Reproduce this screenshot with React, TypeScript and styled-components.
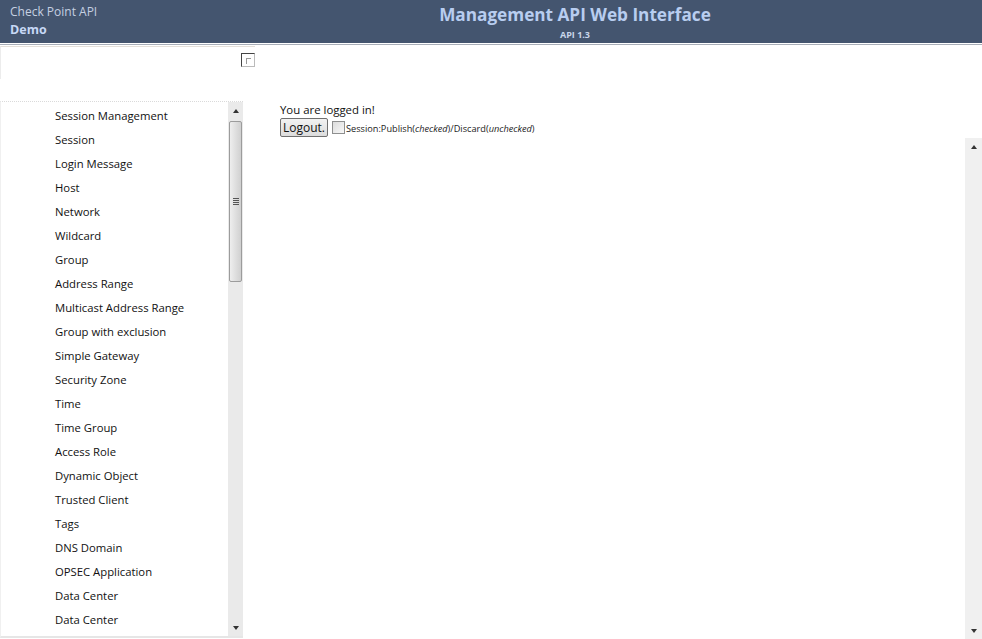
import React from "react";
import styled, { createGlobalStyle } from "styled-components";

const Global = createGlobalStyle`
  html, body { margin: 0; padding: 0; background: #fff; }
  body { font-family: "Open Sans", "Noto Sans", sans-serif; color: #111; overflow: hidden; }
`;

const Page = styled.div`
  width: 982px;
  height: 639px;
  display: flex;
  flex-direction: column;
  overflow: hidden;
`;

const Header = styled.header`
  height: 43px;
  background: #44556f;
  border-bottom: 1px solid #fff;
  box-shadow: 0 1px 0 #a8aeb8;
  display: grid;
  grid-template-columns: 168px 1fr;
  align-items: start;
  flex-shrink: 0;
`;

const Brand = styled.div`
  padding: 3px 0 0 10px;
  display: flex;
  flex-direction: column;
`;

const BrandTop = styled.span`
  font-size: 12px;
  line-height: 17px;
  color: #c5d0e2;
`;

const BrandName = styled.span`
  font-size: 12.5px;
  line-height: 20px;
  font-weight: 700;
  color: #c7d8f6;
`;

const TitleBlock = styled.div`
  display: flex;
  flex-direction: column;
  align-items: center;
  padding-top: 3px;
`;

const Title = styled.h1`
  margin: 0;
  font-size: 17.2px;
  line-height: 24px;
  font-weight: 700;
  color: #b8cdf0;
`;

const Version = styled.span`
  font-size: 9px;
  line-height: 12px;
  margin-top: 2px;
  font-weight: 700;
  color: #c9d6ea;
`;

const Body = styled.div`
  flex: 1;
  display: flex;
  min-height: 0;
  padding-top: 2px;
`;

const LeftColumn = styled.div`
  width: 255px;
  display: flex;
  flex-direction: column;
  flex-shrink: 0;
`;

const SearchBox = styled.div`
  height: 26px;
  border-top: 1px solid #e4e0da;
  border-left: 1px solid #ececec;
  display: flex;
  justify-content: flex-end;
  padding-top: 6px;
`;

const TinyToggle = styled.div`
  width: 12px;
  height: 12px;
  border: 1px solid #444;
  border-right-color: #bbb;
  border-bottom-color: #bbb;
  position: relative;
  &::after {
    content: "";
    position: absolute;
    left: 4px;
    top: 4px;
    width: 4px;
    height: 5px;
    border-left: 1px solid #999;
    border-top: 1px solid #999;
  }
`;

const Sidebar = styled.nav`
  margin-top: 22px;
  width: 243px;
  height: 537px;
  display: flex;
  border-top: 1px dotted #dadada;
  border-bottom: 2px solid #e6e6e6;
  border-left: 1px solid #f0f0f0;
  box-sizing: border-box;
`;

const ItemList = styled.ul`
  flex: 1;
  margin: 0;
  padding: 2px 0 0 0;
  list-style: none;
  overflow: hidden;
`;

const Item = styled.li`
  padding-left: 54px;
  font-size: 11.3px;
  line-height: 24px;
  color: #111;
  white-space: nowrap;
`;

const ScrollTrack = styled.div<{ $w: number; $bg: string }>`
  width: ${(p) => p.$w}px;
  background: ${(p) => p.$bg};
  display: flex;
  flex-direction: column;
  align-items: center;
  flex-shrink: 0;
`;

const Arrow = styled.div<{ $down?: boolean }>`
  height: 17px;
  width: 100%;
  display: flex;
  align-items: center;
  justify-content: center;
  flex-shrink: 0;
  &::before {
    content: "";
    width: 0;
    height: 0;
    border-left: 3.5px solid transparent;
    border-right: 3.5px solid transparent;
    ${(p) =>
      p.$down
        ? "border-top: 4px solid #333;"
        : "border-bottom: 4px solid #333;"}
  }
`;

const Thumb = styled.div`
  width: 13px;
  height: 161px;
  margin-top: 2px;
  box-sizing: border-box;
  border: 1px solid #9c9c9c;
  border-radius: 2px;
  background: linear-gradient(to right, #eeeeee, #dcdcdc 60%, #d0d0d0);
  display: flex;
  flex-direction: column;
  align-items: center;
  justify-content: center;
  gap: 1px;
`;

const Grip = styled.span`
  width: 6px;
  height: 1px;
  background: #555;
`;

const Spacer = styled.div`
  flex: 1;
`;

const Main = styled.main`
  flex: 1;
  display: flex;
  flex-direction: column;
  padding: 56px 0 0 25px;
  min-width: 0;
`;

const Status = styled.div`
  font-size: 11.4px;
  line-height: 15px;
  color: #111;
`;

const Controls = styled.div`
  display: flex;
  align-items: flex-end;
  gap: 4px;
  height: 20px;
`;

const LogoutButton = styled.button`
  font-family: inherit;
  font-size: 12px;
  height: 19px;
  padding: 0 2px;
  border: 1px solid #707070;
  border-radius: 2px;
  background: linear-gradient(#f2f2f2, #dcdcdc);
  color: #111;
  line-height: 15px;
`;

const CheckLabel = styled.label`
  display: flex;
  align-items: flex-end;
  font-size: 9.2px;
  line-height: 12px;
  color: #222;
  padding-bottom: 2px;
  & em { font-style: italic; }
`;

const Box = styled.span`
  width: 11px;
  height: 11px;
  border: 1px solid #8e8f8f;
  background: linear-gradient(135deg, #dcdcdc, #f8f8f8);
  margin-right: 1px;
  margin-bottom: 1px;
  align-self: flex-start;
`;

const ContentRow = styled.div`
  flex: 1;
  display: flex;
  justify-content: flex-end;
  min-height: 0;
  padding-top: 1px;
`;

const items = [
  "Session Management",
  "Session",
  "Login Message",
  "Host",
  "Network",
  "Wildcard",
  "Group",
  "Address Range",
  "Multicast Address Range",
  "Group with exclusion",
  "Simple Gateway",
  "Security Zone",
  "Time",
  "Time Group",
  "Access Role",
  "Dynamic Object",
  "Trusted Client",
  "Tags",
  "DNS Domain",
  "OPSEC Application",
  "Data Center",
  "Data Center",
];

export default function App() {
  return (
    <>
      <Global />
      <Page>
        <Header>
          <Brand>
            <BrandTop>Check Point API</BrandTop>
            <BrandName>Demo</BrandName>
          </Brand>
          <TitleBlock>
            <Title>Management API Web Interface</Title>
            <Version>API 1.3</Version>
          </TitleBlock>
        </Header>
        <Body>
          <LeftColumn>
            <SearchBox>
              <TinyToggle />
            </SearchBox>
            <Sidebar>
              <ItemList>
                {items.map((t, i) => (
                  <Item key={i}>{t}</Item>
                ))}
              </ItemList>
              <ScrollTrack $w={15} $bg="#eaeaea">
                <Arrow />
                <Thumb>
                  <Grip />
                  <Grip />
                  <Grip />
                  <Grip />
                </Thumb>
                <Spacer />
                <Arrow $down />
              </ScrollTrack>
            </Sidebar>
          </LeftColumn>
          <Main>
            <Status>You are logged in!</Status>
            <Controls>
              <LogoutButton>Logout.</LogoutButton>
              <CheckLabel>
                <Box />
                Session:Publish(<em>checked</em>)/Discard(<em>unchecked</em>)
              </CheckLabel>
            </Controls>
            <ContentRow>
              <ScrollTrack $w={17} $bg="#f0f0f0">
                <Arrow />
                <Spacer />
                <Arrow $down />
              </ScrollTrack>
            </ContentRow>
          </Main>
        </Body>
      </Page>
    </>
  );
}
